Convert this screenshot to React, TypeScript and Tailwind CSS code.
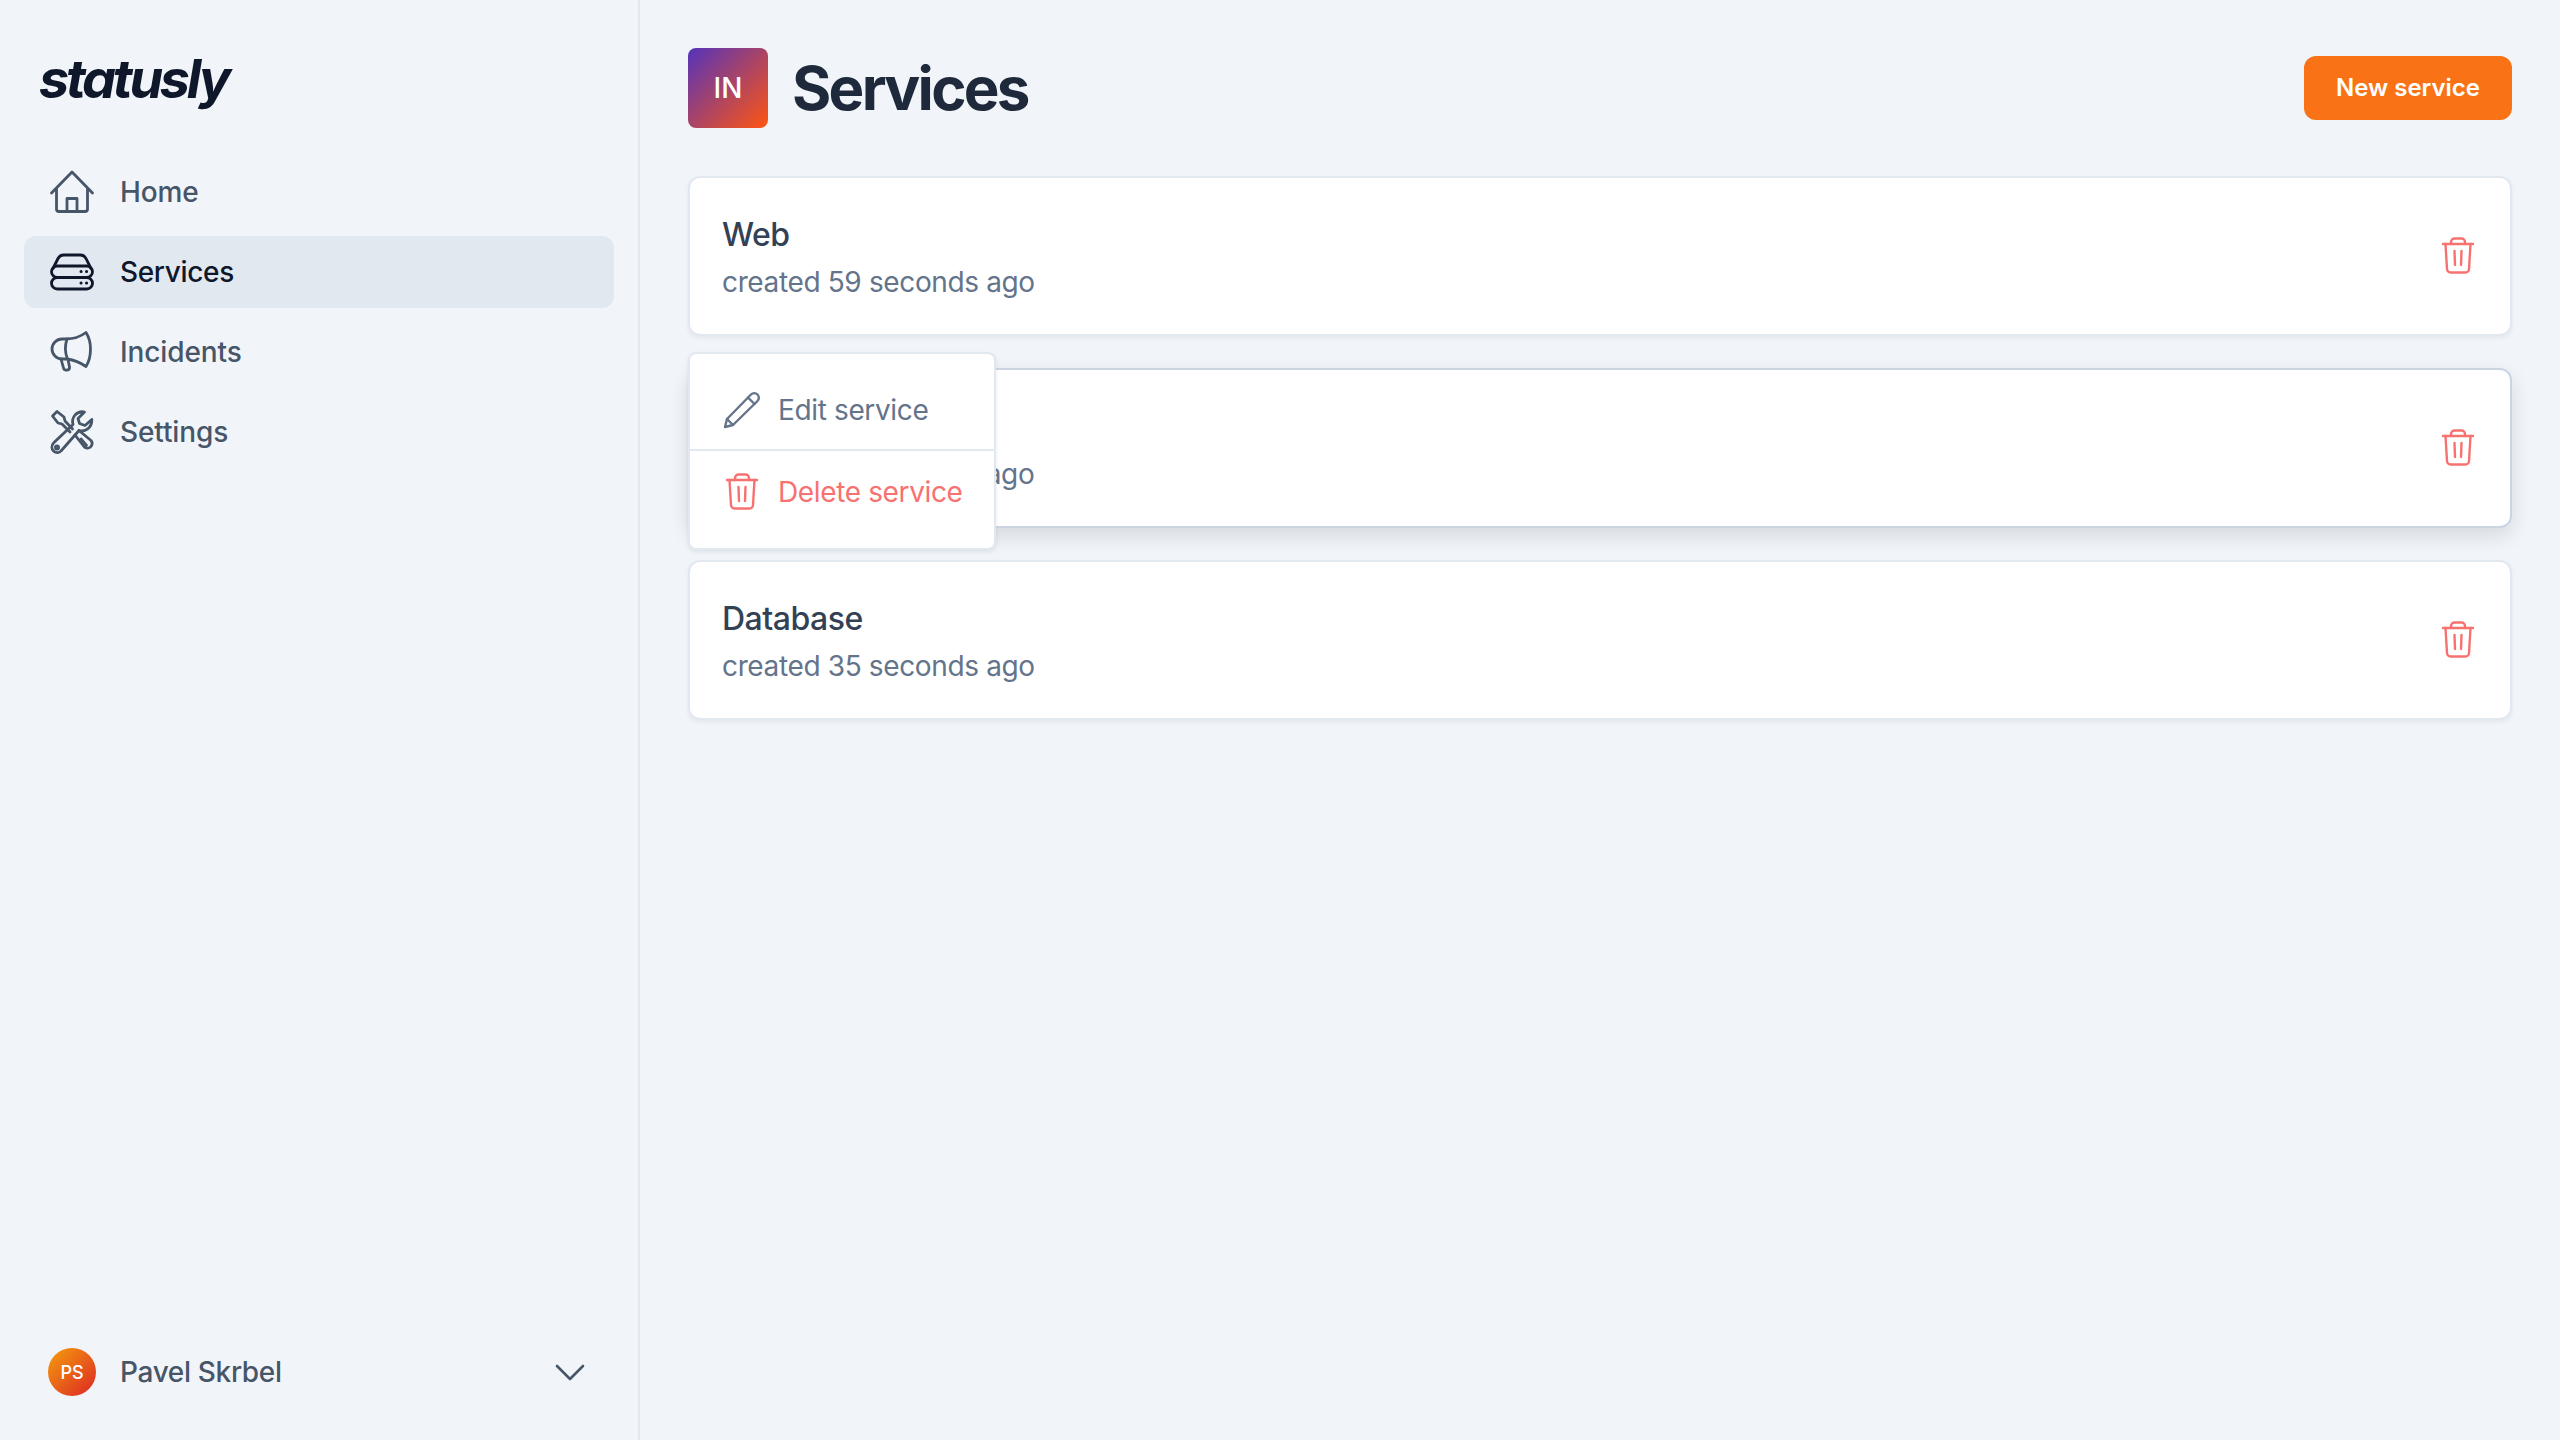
import React from "react";

const font = { fontFamily: "Inter, 'Noto Sans', sans-serif" };

function HomeIcon() {
  return (
    <svg viewBox="0 0 48 48" className="w-12 h-12 shrink-0" fill="none" stroke="currentColor" strokeWidth="2.8" strokeLinecap="round" strokeLinejoin="round">
      <path d="M3.500 25 L24 4 L44.500 25 M8.500 20.500 V41 a2.500 2.500 0 0 0 2.500 2.500 H37 a2.500 2.500 0 0 0 2.500 -2.500 V20.500" />
      <path d="M19 43.500 V30.500 H29 V43.500" />
    </svg>
  );
}
function ServicesIcon() {
  return (
    <svg viewBox="0 0 48 48" className="w-12 h-12 shrink-0" fill="none" stroke="currentColor" strokeWidth="2.8" strokeLinecap="round" strokeLinejoin="round">
      <rect x="3.500" y="18" width="41" height="11.500" rx="5.750" />
      <rect x="3.500" y="29.500" width="41" height="11.500" rx="5.750" />
      <path d="M5 20.500 L10 10.500 C11.200 8 13 7 15.500 7 H32.500 C35 7 36.800 8 38 10.500 L43 20.500" />
      <path d="M33 23.500 h.1 M38.500 23.500 h.1 M33 35 h.1 M38.500 35 h.1" strokeWidth="3" />
    </svg>
  );
}
function IncidentsIcon() {
  return (
    <svg viewBox="0 0 48 48" className="w-12 h-12 shrink-0" fill="none" stroke="currentColor" strokeWidth="2.800" strokeLinecap="round" strokeLinejoin="round">
      <path d="M16 31 H14 a10 10 0 0 1 0 -20 H18 C25 11 32 9 38 4.500 C41.500 10 42.500 16 42.500 21 C42.500 27 41.500 33 38 38.500 C33 35 26 32 19 31 H16 Z" />
      <path d="M19 11 C17 17 17 25 19.500 31" />
      <path d="M13 31 L15.500 40 C16.500 43.500 22 42.500 21.500 39 L20 31.500" />
    </svg>
  );
}
function SettingsIcon() {
  return (
    <svg viewBox="0 0 48 48" className="w-12 h-12 shrink-0" fill="none" stroke="currentColor" strokeWidth="2.800" strokeLinecap="round" strokeLinejoin="round">
      <path d="M24.500 21 L17 13 L16 9 L9 3.500 L4.500 8 L10 15 L14 16 L22 24" />
      <path d="M27 27 L36 38.500 a4.200 4.200 0 0 0 7 -6 L31 22.500" />
      <path d="M38.500 37.500 L33 31" />
      <path d="M31 22.500 C37 24.500 44 20 43.800 11.500 L37 17.500 L31.500 15.500 L30 10.500 L36.500 4 C29 2.500 23 9 25 16.500 L6 34.500 C2.500 38 4 41.500 5.500 43 C8 45.500 11.500 45 13 43 L31 22.500 Z" />
      <circle cx="9" cy="39.500" r="1.600" />
    </svg>
  );
}
function TrashIcon({ className }: { className: string }) {
  return (
    <svg viewBox="0 0 40 40" className={className} fill="none" stroke="currentColor" strokeWidth="2.400" strokeLinecap="round" strokeLinejoin="round">
      <path d="M5 8 H35" />
      <path d="M13 8 V6 a3.500 3.500 0 0 1 3.500 -3.500 H23.500 a3.500 3.500 0 0 1 3.500 3.500 V8" />
      <path d="M7.500 8 L9 33 a3.500 3.500 0 0 0 3.500 3.500 H27.500 a3.500 3.500 0 0 0 3.500 -3.500 L32.500 8" />
      <path d="M16.500 15 L17 29 M23.500 15 L23 29" />
    </svg>
  );
}
function PencilIcon() {
  return (
    <svg viewBox="0 0 40 40" className="w-10 h-10 shrink-0 text-[#64748b]" fill="none" stroke="currentColor" strokeWidth="2.400" strokeLinecap="round" strokeLinejoin="round">
      <path d="M3 37 L5 29 L29 4.500 a3.800 3.800 0 0 1 6.500 6.500 L11 35 Z" />
      <path d="M26 7.500 L32.500 14 M5 29 L11 35" />
    </svg>
  );
}

function NavItem({ icon, label, active }: { icon: React.ReactNode; label: string; active?: boolean }) {
  return (
    <div className={active
      ? "flex h-[72px] items-center gap-6 rounded-xl bg-[#e2e8f0] px-6 text-[28px] font-medium tracking-[-0.012em] text-[#0f172a]"
      : "flex h-[72px] items-center gap-6 rounded-xl px-6 text-[28px] font-medium tracking-[-0.004em] text-[#475569]"}>
      {icon}
      <span>{label}</span>
    </div>
  );
}

function ServiceCard({ name, time, hovered }: { name: string; time: string; hovered?: boolean }) {
  return (
    <div className={hovered
      ? "flex h-40 items-center justify-between rounded-xl border-2 border-[#cbd5e1] bg-white px-8 shadow-[0_8px_20px_rgba(15,23,42,0.12)]"
      : "flex h-40 items-center justify-between rounded-xl border-2 border-[#e2e8f0] bg-white px-8 shadow-[0_2px_4px_rgba(15,23,42,0.06)]"}>
      <div className="flex flex-col">
        <span className="text-[32px] leading-[48px] font-medium tracking-[-0.016em] text-[#334155]">{name}</span>
        <span className="mt-[3px] text-[28px] leading-[40px] tracking-[-0.013em] text-[#64748b]">{time}</span>
      </div>
      <TrashIcon className="w-10 h-10 shrink-0 text-[#f87171]" />
    </div>
  );
}

export default function App() {
  return (
    <div style={font} className="flex h-screen w-full bg-[#f1f5f9]">
      <aside className="flex h-full w-[640px] shrink-0 flex-col justify-between border-r-2 border-[#e2e8f0]">
        <div className="flex flex-col">
          <div className="flex h-[156px] items-center pl-[39px] pt-[2px]">
            <span className="text-[54px] leading-none font-bold italic tracking-[-0.06em] text-[#0f172a]">statusly</span>
          </div>
          <nav className="flex flex-col gap-2 pl-6 pr-6">
            <NavItem icon={<HomeIcon />} label="Home" />
            <NavItem icon={<ServicesIcon />} label="Services" active />
            <NavItem icon={<IncidentsIcon />} label="Incidents" />
            <NavItem icon={<SettingsIcon />} label="Settings" />
          </nav>
        </div>
        <div className="mb-6 flex h-[88px] items-center justify-between pl-12 pr-[53px]">
          <div className="flex items-center gap-6">
            <div className="flex h-12 w-12 items-center justify-center rounded-full bg-[linear-gradient(135deg,#f59e0b,#dc2626)] text-[18px] font-medium text-white">PS</div>
            <span className="text-[28px] font-medium tracking-[-0.012em] text-[#475569]">Pavel Skrbel</span>
          </div>
          <svg viewBox="0 0 30 17" className="h-[17px] w-[30px] text-[#475569]" fill="none" stroke="currentColor" strokeWidth="2.600" strokeLinecap="round" strokeLinejoin="round">
            <path d="M2 2 L15 15 L28 2" />
          </svg>
        </div>
      </aside>
      <main className="flex min-w-0 flex-1 flex-col pl-12 pr-12">
        <header className="flex h-[176px] items-start justify-between pt-12">
          <div className="flex h-20 items-center gap-6">
            <div className="flex h-20 w-20 items-center justify-center rounded-lg bg-[linear-gradient(135deg,#5533bb,#ff5511)] text-[28px] font-medium text-white">IN</div>
            <h1 className="text-[60px] leading-none font-[650] tracking-[-0.045em] text-[#1e293b]">Services</h1>
          </div>
          <button className="mt-2 flex h-16 w-[208px] items-center justify-center rounded-xl bg-[#f97316] text-[24px] font-semibold text-white">New service</button>
        </header>
        <div className="relative flex flex-col gap-8">
          <ServiceCard name="Web" time="created 59 seconds ago" />
          <ServiceCard name="API" time="created 47 seconds ago" hovered />
          <ServiceCard name="Database" time="created 35 seconds ago" />
          <div className="absolute left-0 top-[176px] flex h-[198px] w-[308px] flex-col rounded-lg border-2 border-[#e2e8f0] bg-white shadow-[0_2px_4px_rgba(15,23,42,0.08)]">
            <div className="flex h-[97px] items-center gap-4 border-b-2 border-[#e2e8f0] px-8 pt-4 text-[28px] tracking-[-0.013em] text-[#64748b]">
              <PencilIcon />
              <span className="whitespace-nowrap">Edit service</span>
            </div>
            <div className="flex flex-1 items-center gap-4 pl-8 pb-4 text-[28px] tracking-[-0.013em] text-[#f87171]">
              <TrashIcon className="w-10 h-10 shrink-0" />
              <span className="whitespace-nowrap">Delete service</span>
            </div>
          </div>
        </div>
      </main>
    </div>
  );
}
